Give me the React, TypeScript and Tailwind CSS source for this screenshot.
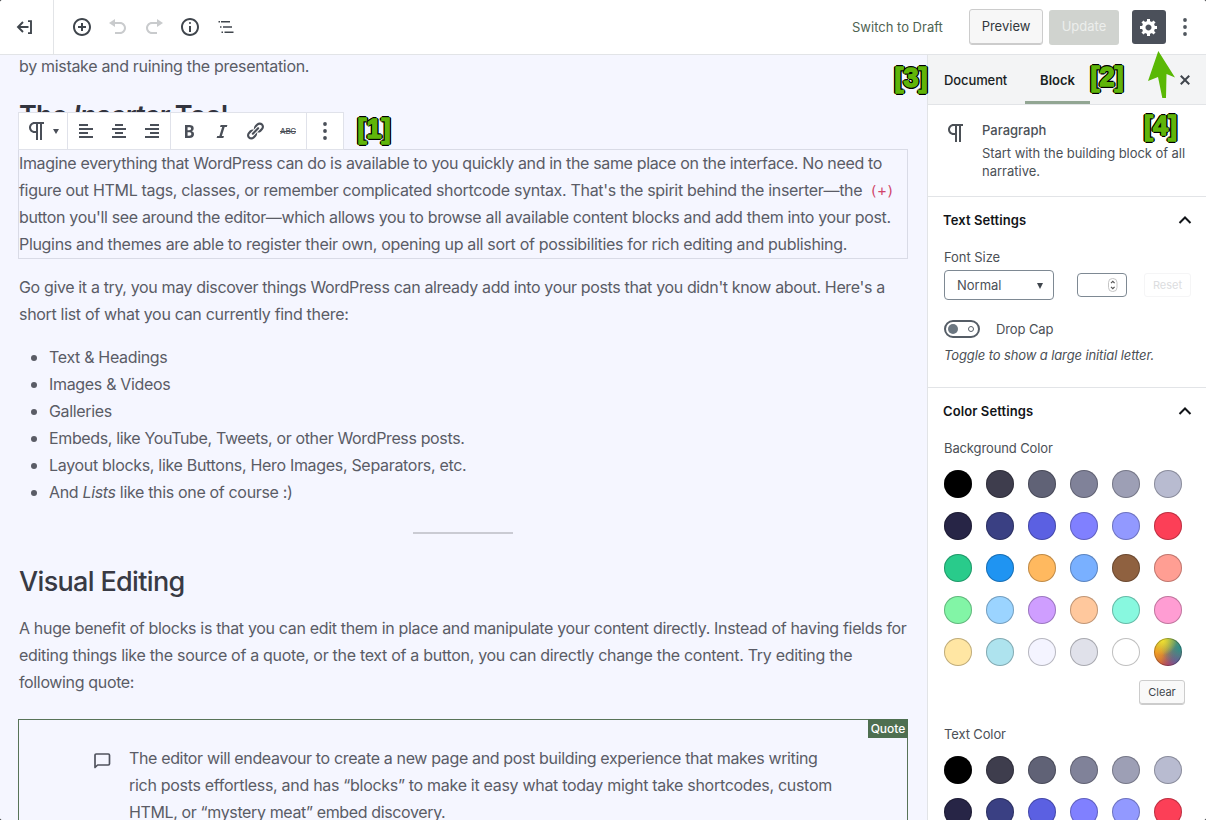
import React from "react";

const P = {
  insert: "M10 1c-5 0-9 4-9 9s4 9 9 9 9-4 9-9-4-9-9-9zm0 16c-3.9 0-7-3.1-7-7s3.1-7 7-7 7 3.1 7 7-3.1 7-7 7zm1-11H9v3H6v2h3v3h2v-3h3V9h-3V6z",
  info: "M9 15h2V9H9v6zm1-10c-.5 0-1 .5-1 1s.5 1 1 1 1-.5 1-1-.5-1-1-1zm0-4c-5 0-9 4-9 9s4 9 9 9 9-4 9-9-4-9-9-9zm0 16c-3.9 0-7-3.1-7-7s3.1-7 7-7 7 3.1 7 7-3.1 7-7 7z",
  undo: "M12 5H7V2L1 6l6 4V7h5c2.2 0 4 1.8 4 4s-1.8 4-4 4H7v2h5c3.3 0 6-2.7 6-6s-2.7-6-6-6z",
  redo: "M8 5h5V2l6 4-6 4V7H8c-2.2 0-4 1.8-4 4s1.8 4 4 4h5v2H8c-3.3 0-6-2.7-6-6s2.7-6 6-6z",
  gear: "M18 12h-2.18c-.17.7-.44 1.35-.81 1.93l1.54 1.54-2.1 2.1-1.54-1.54c-.58.36-1.23.63-1.91.79V19H8v-2.18c-.68-.16-1.33-.43-1.91-.79l-1.54 1.54-2.12-2.12 1.54-1.54c-.36-.58-.63-1.23-.79-1.91H1V9.03h2.17c.16-.7.44-1.35.8-1.94L2.43 5.55l2.1-2.1 1.54 1.54c.58-.37 1.24-.64 1.93-.81V2h3v2.18c.68.16 1.33.43 1.91.79l1.54-1.54 2.12 2.12-1.54 1.54c.36.59.64 1.24.8 1.94H18V12zm-8.5 1.5c1.66 0 3-1.34 3-3s-1.34-3-3-3-3 1.34-3 3 1.34 3 3 3z",
  bold: "M6 4v13h4.54c1.37 0 2.46-.33 3.26-1 .8-.66 1.2-1.58 1.2-2.77 0-.84-.17-1.51-.51-2.01s-.9-.85-1.67-1.03v-.09c.57-.1 1.02-.4 1.36-.9s.51-1.13.51-1.91c0-1.14-.39-1.98-1.17-2.5C12.75 4.26 11.5 4 9.78 4H6zm2.57 5.15V6.26h1.36c.73 0 1.27.11 1.61.32.34.22.51.58.51 1.07 0 .54-.16.92-.47 1.15s-.82.35-1.51.35h-1.5zm0 2.19h1.6c1.44 0 2.16.53 2.16 1.61 0 .6-.17 1.05-.51 1.34s-.86.43-1.57.43H8.57v-3.38z",
  italic: "M14.78 6h-2.13l-2.8 9h2.12l-.62 2H4.6l.62-2h2.14l2.8-9H8.03l.62-2h6.75z",
  link: "M17.74 2.76c1.68 1.69 1.68 4.41 0 6.1l-1.53 1.52c-1.12 1.12-2.7 1.47-4.14 1.09l2.62-2.61.76-.77.76-.76c.84-.84.84-2.2 0-3.04-.84-.85-2.2-.85-3.04 0l-.77.76-3.38 3.38c-.37-1.44-.02-3.02 1.1-4.14l1.52-1.53c1.69-1.68 4.42-1.68 6.1 0zM8.59 13.43l5.34-5.34c.42-.42.42-1.1 0-1.52-.44-.43-1.13-.39-1.53 0l-5.33 5.34c-.42.42-.42 1.1 0 1.52.44.43 1.13.39 1.52 0zm-.76 2.29l4.14-4.15c.38 1.44.03 3.02-1.09 4.14l-1.52 1.53c-1.69 1.68-4.41 1.68-6.1 0-1.68-1.68-1.68-4.42 0-6.1l1.53-1.52c1.12-1.12 2.7-1.47 4.14-1.1l-4.14 4.15c-.85.84-.85 2.2 0 3.05.84.84 2.2.84 3.04 0z",
  left: "M12 5V3H3v2h9zm5 4V7H3v2h14zm-5 4v-2H3v2h9zm5 4v-2H3v2h14z",
  center: "M14 5V3H6v2h8zm3 4V7H3v2h14zm-3 4v-2H6v2h8zm3 4v-2H3v2h14z",
  right: "M17 5V3H8v2h9zm0 4V7H3v2h14zm0 4v-2H8v2h9zm0 4v-2H3v2h14z",
  close: "M14.95 6.46L11.41 10l3.54 3.54-1.41 1.41L10 11.42l-3.53 3.53-1.42-1.42L8.58 10 5.05 6.47l1.42-1.42L10 8.58l3.54-3.53z",
  paragraph: "M11 5v7H9.5C7.6 12 6 10.4 6 8.5S7.6 5 9.5 5H11m8-2H9.5C6.5 3 4 5.5 4 8.5S6.5 14 9.5 14H11v7h2V5h2v16h2V5h2V3z",
};

function Icon({ d, box = 20, className = "size-5" }: { d: string; box?: number; className?: string }) {
  return (
    <svg viewBox={`0 0 ${box} ${box}`} fill="currentColor" className={`shrink-0 ${className}`}>
      <path d={d} />
    </svg>
  );
}

function Dots() {
  return (
    <svg viewBox="0 0 20 20" fill="currentColor" className="size-5 shrink-0">
      <circle cx="10" cy="3" r="1.9" />
      <circle cx="10" cy="10" r="1.9" />
      <circle cx="10" cy="17" r="1.9" />
    </svg>
  );
}

function Line({ children, className = "" }: { children: React.ReactNode; className?: string }) {
  return <span className={`block whitespace-nowrap ${className}`}>{children}</span>;
}

function Mark({ n, className }: { n: string; className: string }) {
  return (
    <span
      className={`absolute z-20 font-['Liberation_Sans'] text-[27px] leading-8 font-bold whitespace-nowrap text-[#60b50a] [-webkit-text-stroke:1.5px_#60b50a] [text-shadow:2px_0_#000,-2px_0_#000,0_2px_#000,0_-2px_#000,1.4px_1.4px_#000,-1.4px_1.4px_#000,1.4px_-1.4px_#000,-1.4px_-1.4px_#000] ${className}`}
    >
      [{n}]
    </span>
  );
}

const COLORS = [
  "bg-[#000000]", "bg-[#3e3d4d]", "bg-[#606276]", "bg-[#808299]", "bg-[#9d9fb5]", "bg-[#b8bbd0]",
  "bg-[#272546]", "bg-[#3a4083]", "bg-[#5b60e2]", "bg-[#8080ff]", "bg-[#9299ff]", "bg-[#fc3f57]",
  "bg-[#29cb8b]", "bg-[#1f94f2]", "bg-[#ffb95f]", "bg-[#79b0ff]", "bg-[#8f6140]", "bg-[#ff9e93]",
  "bg-[#82f5a6]", "bg-[#9bd4ff]", "bg-[#cf9eff]", "bg-[#ffc89d]", "bg-[#88f8df]", "bg-[#ff9dd3]",
  "bg-[#ffe6a3]", "bg-[#aee3ee]", "bg-[#f4f4ff]", "bg-[#e0e1ea]", "bg-[#ffffff]",
];

function Swatches({ rainbow = false }: { rainbow?: boolean }) {
  return (
    <div className="grid grid-cols-[repeat(6,28px)] gap-[14px]">
      {COLORS.map((c) => (
        <span key={c} className={`size-7 rounded-full shadow-[inset_0_0_0_1px_rgba(0,0,0,0.25)] ${c}`} />
      ))}
      {rainbow && (
        <span className="size-7 rounded-full shadow-[inset_0_0_0_1px_rgba(0,0,0,0.25)] bg-[radial-gradient(circle_at_30%_10%,#f0e030_0%,transparent_45%),radial-gradient(circle_at_95%_35%,#2b8f8c_0%,transparent_60%),radial-gradient(circle_at_85%_85%,#7350a0_0%,transparent_50%),radial-gradient(circle_at_5%_50%,#f59a22_0%,transparent_60%),linear-gradient(180deg,#8fb548,#c9414a)]" />
      )}
    </div>
  );
}

function Header() {
  return (
    <header className="flex h-[55px] shrink-0 border-b border-[#e2e4e7] bg-white text-[#50575e]">
      <div className="flex w-[54px] items-center justify-center border-r border-[#e2e4e7] pr-1">
        <svg viewBox="0 0 20 20" fill="none" stroke="#40464d" strokeWidth="1.9" className="size-5">
          <path d="M13 4.1h3v12h-3M13.5 10H3.500M8 5L3 10l5 5" />
        </svg>
      </div>
      <div className="flex items-center gap-4 pl-[18px] text-[#40464d]">
        <Icon d={P.insert} />
        <span className="flex gap-4 text-[#c9cbcd]">
          <Icon d={P.undo} />
          <Icon d={P.redo} />
        </span>
        <Icon d={P.info} />
        <svg viewBox="0 0 20 20" fill="currentColor" className="size-5">
          <path d="M2.500 4h1.500v1.600H2.500zM5 4h9v1.600H5zM4 9.200h1.500v1.600H4zM7 9.200h9v1.600H7zM5.500 14.400H7V16H5.500zM8.500 14.400h9V16h-9z" />
        </svg>
      </div>
      <div className="ml-auto flex items-center pr-[11px] text-[13px]">
        <span className="mr-[26px] w-[91px] pt-px whitespace-nowrap text-[#4f6352]">Switch to Draft</span>
        <span className="mr-1.5 flex h-9 w-[74px] items-center justify-center rounded-[3px] border border-[#ccc] bg-[#f7f7f7] text-[#32373c] shadow-[inset_0_-1px_0_#ccc]">
          Preview
        </span>
        <span className="mr-[13px] flex h-[35px] w-[70px] items-center justify-center rounded-[3px] bg-[#d0d3cf] text-[#eceeec]">Update</span>
        <span className="mr-[9px] flex size-[34px] items-center justify-center rounded-[3px] bg-[#4b505a] text-white">
          <Icon d={P.gear} />
        </span>
        <Dots />
      </div>
    </header>
  );
}

function Toolbar() {
  return (
    <div className="absolute -top-[38px] -left-px flex h-[38px] w-[326px] border border-[#e0e2ea] bg-white text-[#4a4f58]">
      <div className="flex w-[49px] items-center border-r border-[#e0e2ea] pl-[6px]">
        <Icon d={P.paragraph} box={24} className="size-6" />
        <span className="ml-1 border-x-[3px] border-t-[5px] border-x-transparent border-t-current" />
      </div>
      <div className="flex w-[103px] items-center gap-[13px] border-r border-[#e0e2ea] pl-2">
        <Icon d={P.left} />
        <Icon d={P.center} />
        <Icon d={P.right} />
      </div>
      <div className="flex w-[136px] items-center gap-[13px] border-r border-[#e0e2ea] pl-2">
        <Icon d={P.bold} />
        <Icon d={P.italic} />
        <Icon d={P.link} />
        <span className="w-5 text-center text-[8px] font-medium tracking-[-0.3px] line-through">ABC</span>
      </div>
      <div className="flex flex-1 items-center justify-center">
        <Dots />
      </div>
    </div>
  );
}

function Bullet({ children, className }: { children: React.ReactNode; className: string }) {
  return (
    <li className="flex items-center">
      <span className="mr-[12px] ml-3 size-1.5 rounded-full bg-current" />
      <Line className={className}>{children}</Line>
    </li>
  );
}

function Editor() {
  return (
    <main className="relative w-[927px] shrink-0 overflow-hidden bg-[#f5f6ff] pl-[19px] text-[16px] leading-[27px] text-[#5a5c66]">
      <p className="-mt-[2px]">
        <Line className="tracking-[-0.315px]">by mistake and ruining the presentation.</Line>
      </p>
      <h2 className="mt-[18px] h-[38px] text-[27px] leading-9 font-semibold tracking-[-0.76px] text-[#32343e]">
        The <i>Inserter</i> Tool
      </h2>
      <section className="relative mt-[13px] -ml-px h-[110px] w-[890px] border border-[#d9dbe6]">
        <Toolbar />
        <Line className="tracking-[-0.35px]">Imagine everything that WordPress can do is available to you quickly and in the same place on the interface. No need to</Line>
        <Line className="h-[27px] tracking-[-0.32px]">
          figure out HTML tags, classes, or remember complicated shortcode syntax. That's the spirit behind the inserter—the{" "}
          <span className="ml-[3px] font-['DejaVu_Sans_Mono'] text-[14px] leading-none tracking-[-0.1px] text-[#d0446a]">(+)</span>
        </Line>
        <Line className="tracking-[-0.343px]">button you'll see around the editor—which allows you to browse all available content blocks and add them into your post.</Line>
        <Line className="tracking-[-0.318px]">Plugins and themes are able to register their own, opening up all sort of possibilities for rich editing and publishing.</Line>
      </section>
      <p className="mt-[15px]">
        <Line className="tracking-[-0.36px]">Go give it a try, you may discover things WordPress can already add into your posts that you didn't know about. Here's a</Line>
        <Line className="tracking-[-0.315px]">short list of what you can currently find there:</Line>
      </p>
      <ul className="mt-4">
        <Bullet className="tracking-[-0.33px]">Text &amp; Headings</Bullet>
        <Bullet className="tracking-[-0.32px]">Images &amp; Videos</Bullet>
        <Bullet className="tracking-[-0.35px]">Galleries</Bullet>
        <Bullet className="tracking-[-0.36px]">Embeds, like YouTube, Tweets, or other WordPress posts.</Bullet>
        <Bullet className="tracking-[-0.312px]">Layout blocks, like Buttons, Hero Images, Separators, etc.</Bullet>
        <Bullet className="tracking-[-0.335px]">
          And <i>Lists</i> like this one of course :)
        </Bullet>
      </ul>
      <hr className="mt-[26px] ml-[394px] h-0.5 w-[100px] border-0 bg-[#cacbd3]" />
      <h2 className="mt-[30px] text-[27px] leading-9 font-[550] tracking-[-0.66px] text-[#383a44]">Visual Editing</h2>
      <p className="mt-[15px]">
        <Line className="tracking-[-0.333px]">A huge benefit of blocks is that you can edit them in place and manipulate your content directly. Instead of having fields for</Line>
        <Line className="tracking-[-0.3px]">editing things like the source of a quote, or the text of a button, you can directly change the content. Try editing the</Line>
        <Line className="tracking-[-0.35px]">following quote:</Line>
      </p>
      <section className="relative mt-[23px] -ml-px flex h-[120px] w-[890px] border border-b-0 border-[#577358] pt-[25px] pl-[74px]">
        <span className="absolute -top-px -right-px flex h-[19px] w-10 items-center justify-center bg-[#4e6f50] text-[12px] font-medium text-white">Quote</span>
        <svg viewBox="0 0 18 18" fill="none" stroke="#50535e" strokeWidth="1.7" className="mt-[7px] size-[18px]">
          <path d="M2 15.5V3.200Q2 2 3.200 2H15.300Q16.500 2 16.500 3.200V11.800Q16.500 13 15.300 13H4.600Z" strokeLinejoin="round" />
        </svg>
        <div className="ml-[18px]">
          <Line className="tracking-[-0.355px]">The editor will endeavour to create a new page and post building experience that makes writing</Line>
          <Line className="tracking-[-0.3px]">rich posts effortless, and has “blocks” to make it easy what today might take shortcodes, custom</Line>
          <Line className="tracking-[-0.37px]">HTML, or “mystery meat” embed discovery.</Line>
        </div>
      </section>
    </main>
  );
}

function PanelTitle({ children }: { children: string }) {
  return (
    <div className="flex h-[47px] items-center justify-between pr-[14px] pl-[15px] text-[13px] font-semibold tracking-[0.1px] text-[#111418]">
      {children}
      <svg viewBox="0 0 14 14" fill="none" stroke="currentColor" strokeWidth="2" className="size-[14px]">
        <path d="M1.500 9L7 3.500l5.500 5.500" />
      </svg>
    </div>
  );
}

function Sidebar() {
  return (
    <aside className="flex-1 overflow-hidden border-l border-[#e2e4e7] bg-white text-[13px] text-[#4b5056]">
      <div className="flex h-[50px] items-center border-b border-[#e2e4e7] bg-[#f3f4f5] text-[#191e23]">
        <span className="w-[97px] pt-0.5 pl-4 font-medium tracking-[-0.1px]">Document</span>
        <span className="flex h-full w-[65px] items-center justify-center border-b-[3px] border-[#92a693] pt-[5px] font-semibold">Block</span>
        <Icon d={P.close} className="ml-auto mr-[11px] size-5 text-[#40464d]" />
      </div>
      <div className="flex h-[92px] border-b border-[#e2e4e7] pt-4 pl-4">
        <Icon d={P.paragraph} box={24} className="size-6" />
        <div className="ml-[14px] leading-[18px]">
          <div className="font-medium">Paragraph</div>
          <div className="mt-[5px]">
            <Line className="tracking-[-0.05px]">Start with the building block of all</Line>
            <Line>narrative.</Line>
          </div>
        </div>
      </div>
      <div className="h-[191px] border-b border-[#e2e4e7]">
        <PanelTitle>Text Settings</PanelTitle>
        <div className="pt-1 pl-4">
          <div className="leading-[19px] tracking-[-0.05px]">Font Size</div>
          <div className="mt-[3px] flex items-center">
            <span className="flex h-[30px] w-[110px] items-center justify-between rounded-[4px] border border-[#7e8993] pt-px pr-[10px] pl-3">
              Normal
              <span className="border-x-[3px] border-t-[6px] border-x-transparent border-t-[#40464d]" />
            </span>
            <span className="ml-[23px] flex h-6 w-[50px] items-center justify-end rounded-[4px] border border-[#7e8993] pr-2">
              <svg viewBox="0 0 10 14" fill="none" stroke="#555" strokeWidth="1.2" className="h-[14px] w-[10px]">
                <rect x=".5" y=".5" width="8.5" height="13" rx="4" stroke="#c5c5c5" strokeWidth="1" />
                <path d="M3 5.200L4.800 3.400l1.800 1.800M3 8.800l1.800 1.800 1.800-1.800" />
              </svg>
            </span>
            <span className="ml-[17px] flex h-6 w-[47px] items-center justify-center rounded-[3px] border border-[#f5f5f6] text-[11px] text-[#dcdde0]">Reset</span>
          </div>
          <div className="mt-[19px] flex items-center">
            <span className="flex h-[18px] w-9 items-center justify-between rounded-full border-2 border-[#555d66] pr-[4px] pl-0.5">
              <span className="size-2.5 rounded-full bg-[#6c7781]" />
              <span className="size-1.5 rounded-full border border-[#555d66]" />
            </span>
            <span className="ml-4 pt-px tracking-[-0.1px]">Drop Cap</span>
          </div>
          <p className="mt-[6px] tracking-[-0.11px] italic">Toggle to show a large initial letter.</p>
        </div>
      </div>
      <PanelTitle>Color Settings</PanelTitle>
      <div className="pl-4">
        <div className="mt-[3px] mb-[12px] leading-5 tracking-[-0.12px]">Background Color</div>
        <Swatches rainbow />
        <div className="mt-[14px] ml-[195px] flex h-[25px] w-[46px] items-center justify-center rounded-[3px] border border-[#ccc] bg-[#f9f9f9] text-[11px] text-[#40464d] shadow-[inset_0_-1px_0_#ccc]">
          Clear
        </div>
        <div className="mt-[19px] mb-[12px] leading-5 tracking-[-0.12px]">Text Color</div>
        <Swatches />
      </div>
    </aside>
  );
}

export default function App() {
  return (
    <div className="h-[820px] w-[1206px] bg-[#3c3e42]">
      <div className="relative flex h-full w-full flex-col overflow-hidden rounded-[3px] bg-white font-['Inter',sans-serif]">
        <Header />
        <div className="flex min-h-0 flex-1">
          <Editor />
          <Sidebar />
        </div>
        <Mark n="1" className="top-[113px] left-[357.5px]" />
        <Mark n="2" className="top-[61px] left-[1090.5px]" />
        <Mark n="3" className="top-[62px] left-[894.5px]" />
        <Mark n="4" className="top-[110px] left-[1144px]" />
        <svg viewBox="0 0 28 48" className="absolute top-[51px] left-[1148px] z-20 h-12 w-7" fill="#5ab805">
          <path d="M10.300 0L27 26.500 18.500 23 18 47H14.300L10 26 0 30Z" />
        </svg>
      </div>
    </div>
  );
}
